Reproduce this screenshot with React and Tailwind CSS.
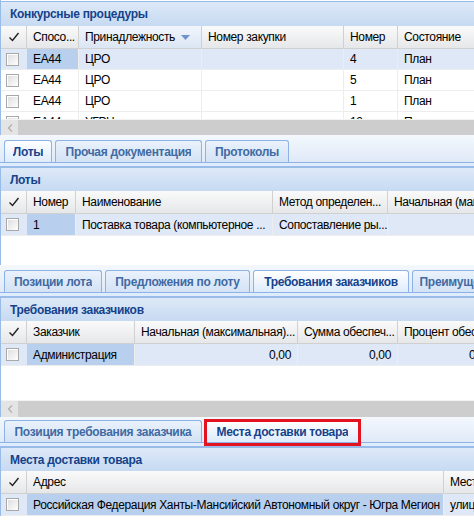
import React from "react";

const font = { fontFamily: '"Liberation Sans", Arial, sans-serif' };

const Check = () => (
  <div className="w-[13px] h-[13px] border border-[#a8a8a8] bg-gradient-to-br from-[#dcdcdc] to-[#ffffff] shadow-[inset_1px_1px_0_#ffffff]" />
);

const HeaderTick = () => (
  <svg width="12" height="12" viewBox="0 0 12 12">
    <path d="M1.5 6.5 L4.5 9.5 L10.5 2" fill="none" stroke="#222" strokeWidth="1.4" />
  </svg>
);

const PanelHeader = ({ title, tall }) => (
  <div
    className={`${tall ? "h-[25px]" : "h-[24px]"} flex items-center pl-[9px] bg-gradient-to-b from-[#dde9f7] to-[#c6daf2] border-t border-[#99bbe8] text-[12px] font-bold tracking-[-0.3px] text-[#15428b]`}
  >
    {title}
  </div>
);

const GridHeader = ({ cols }) => (
  <div className="h-[23px] flex bg-gradient-to-b from-[#fafafa] to-[#e6e7e9] border-b border-[#d0d0d0]">
    <div className="w-[26px] shrink-0 flex items-center justify-center border-r border-[#d0d0d0]">
      <HeaderTick />
    </div>
    {cols.map((c, i) => (
      <div
        key={i}
        className={`shrink-0 flex items-center px-[6px] whitespace-nowrap overflow-hidden border-r border-[#d0d0d0] ${c.sorted ? "bg-gradient-to-b from-[#f1f6fd] to-[#dbe6f4]" : ""}`}
        style={{ width: c.w }}
      >
        {c.label}
        {c.sorted && (
          <svg width="9" height="5" viewBox="0 0 9 5" className="ml-[6px]">
            <path d="M0 0 H9 L4.5 5 Z" fill="#6d94cf" />
          </svg>
        )}
      </div>
    ))}
  </div>
);

const Row = ({ cols, cells, selected, h = "h-[21px]" }) => (
  <div className={`${h} flex border-b border-[#ededed] ${selected ? "bg-[#dfe8f6]" : "bg-white"}`}>
    <div className="w-[26px] shrink-0 flex items-center pl-[5px]">
      <Check />
    </div>
    {cols.map((c, i) => (
      <div
        key={i}
        className={`shrink-0 flex items-center px-[6px] whitespace-nowrap overflow-hidden border-r border-[#ededed] ${c.right ? "justify-end" : ""} ${selected && i === 0 ? "bg-[#b8cfee]" : ""}`}
        style={{ width: c.w }}
      >
        {cells[i]}
      </div>
    ))}
  </div>
);

const Scrollbar = ({ h = "h-[16px]" }) => (
  <div className={`${h} flex bg-[#cdcdcd] border-t border-[#f3f3f3]`}>
    <div className="w-[17px] flex items-center justify-center bg-[#e4e4e4]">
      <svg width="6" height="8" viewBox="0 0 6 8">
        <path d="M5 0.5 L1.5 4 L5 7.5" fill="none" stroke="#b0b0b0" strokeWidth="1.3" />
      </svg>
    </div>
  </div>
);

const Tabs = ({ tabs, active, marked, h = "h-[28px]" }) => (
  <div className="bg-gradient-to-b from-[#f4f8fd] to-[#dbe7f7]">
    <div className={`flex items-end gap-[3px] pl-[4px] ${h} border-b border-[#8db2e3]`}>
      {tabs.map((t, i) => {
        const isActive = i === active;
        return (
          <div
            key={i}
            className={`relative h-[22px] shrink-0 flex items-center justify-center rounded-t-[3px] border border-b-0 border-[#8db2e3] text-[12px] font-bold tracking-[-0.3px] whitespace-nowrap ${isActive ? "bg-gradient-to-b from-[#ffffff] to-[#deecfd] text-[#15428b]" : "bg-gradient-to-b from-[#eaf2fc] to-[#d3e2f5] text-[#416aa3]"}`}
            style={{ width: t.w }}
          >
            <span className="overflow-hidden">{t.label}</span>
            {marked === i && (
              <span className="absolute left-[-2px] right-[-2px] top-[-2px] bottom-[-4px] border-[3px] border-[#e3141f]" />
            )}
          </div>
        );
      })}
    </div>
    <div className="h-[4px] bg-[#deecfd] border-b border-[#99bbe8]" />
  </div>
);

const cols1 = [
  { w: 52, label: "Спосо..." },
  { w: 123, label: "Принадлежность", sorted: true },
  { w: 142, label: "Номер закупки" },
  { w: 54, label: "Номер" },
  { w: 100, label: "Состояние" },
];

const cols2 = [
  { w: 49, label: "Номер" },
  { w: 197, label: "Наименование" },
  { w: 115, label: "Метод определен..." },
  { w: 140, label: "Начальная (максимальная) цена" },
];

const cols3 = [
  { w: 108, label: "Заказчик" },
  { w: 163, label: "Начальная (максимальная)...", right: true },
  { w: 100, label: "Сумма обеспеч...", right: true },
  { w: 100, label: "Процент обеспечения", right: true },
];

const cols4 = [
  { w: 417, label: "Адрес" },
  { w: 100, label: "Место" },
];

export default function App() {
  return (
    <div className="w-[474px] h-[525px] overflow-hidden bg-white text-[12px] tracking-[-0.35px] text-black" style={font}>
      {/* Конкурсные процедуры */}
      <div className="border-l border-[#99bbe8] pt-[1px]">
        <PanelHeader title="Конкурсные процедуры" tall />
        <GridHeader cols={cols1} />
        <div className="h-[70px] overflow-hidden">
          <Row cols={cols1} cells={["ЕА44", "ЦРО", "", "4", "План"]} selected />
          <Row cols={cols1} cells={["ЕА44", "ЦРО", "", "5", "План"]} />
          <Row cols={cols1} cells={["ЕА44", "ЦРО", "", "1", "План"]} />
          <Row cols={cols1} cells={["ЕА44", "УГРН", "", "12", "План"]} />
        </div>
        <Scrollbar />
      </div>

      {/* Лоты */}
      <Tabs
        tabs={[
          { label: "Лоты", w: 48 },
          { label: "Прочая документация", w: 147 },
          { label: "Протоколы", w: 84 },
        ]}
        active={0}
      />
      <div className="border-l border-[#99bbe8]">
        <PanelHeader title="Лоты" />
        <GridHeader cols={cols2} />
        <Row
          cols={cols2}
          cells={["1", "Поставка товара (компьютерное ...", "Сопоставление ры...", ""]}
          selected
          h="h-[22px]"
        />
        <div className="h-[29px] bg-white" />
      </div>

      {/* Требования заказчиков */}
      <Tabs
        tabs={[
          { label: "Позиции лота", w: 98 },
          { label: "Предложения по лоту", w: 145 },
          { label: "Требования заказчиков", w: 156 },
          { label: "Преимущества", w: 100 },
        ]}
        active={2}
      />
      <div className="border-l border-[#99bbe8]">
        <PanelHeader title="Требования заказчиков" />
        <GridHeader cols={cols3} />
        <Row cols={cols3} cells={["Администрация", "0,00", "0,00", "0,00"]} selected h="h-[22px]" />
        <div className="h-[34px] bg-white" />
        <Scrollbar h="h-[17px]" />
      </div>

      {/* Места доставки товара */}
      <Tabs
        tabs={[
          { label: "Позиция требования заказчика", w: 198 },
          { label: "Места доставки товара", w: 155 },
        ]}
        active={1}
        marked={1}
        h="h-[26px]"
      />
      <div className="border-l border-[#99bbe8]">
        <PanelHeader title="Места доставки товара" />
        <GridHeader cols={cols4} />
        <Row
          cols={cols4}
          cells={["Российская Федерация Ханты-Мансийский Автономный округ - Югра  Мегион", "улица"]}
          selected
          h="h-[22px]"
        />
      </div>
    </div>
  );
}
